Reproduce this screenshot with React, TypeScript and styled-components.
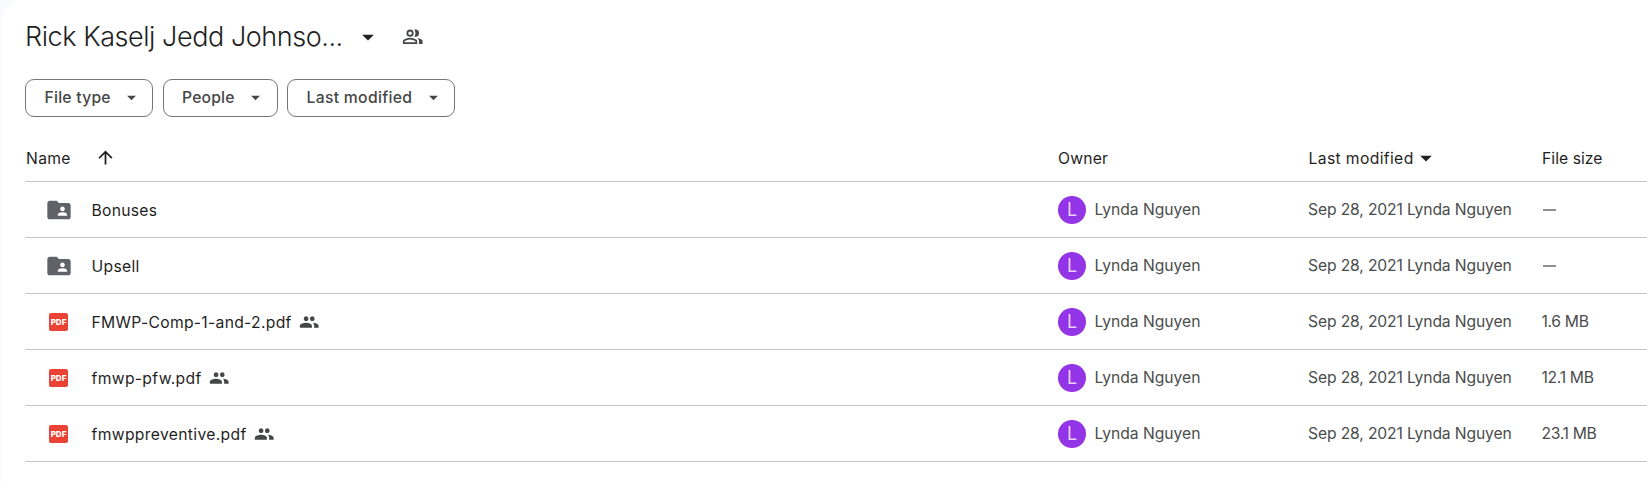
import React from "react";
import styled, { createGlobalStyle } from "styled-components";

const Global = createGlobalStyle`
  *, *::before, *::after { box-sizing: border-box; }
  body { margin: 0; background: #f8fafd; overflow: hidden; }
`;

const Panel = styled.main`
  height: 482px;
  margin-left: 2px;
  padding: 16px 0 0 23px;
  background: #fff;
  border-top-left-radius: 19px;
  font-family: Inter, "Liberation Sans", sans-serif;
  font-size: 15.7px;
  color: #1f1f1f;
  overflow: hidden;
`;

const Label = styled.span<{ $track?: number }>`
  letter-spacing: ${(p) => p.$track ?? 0}px;
  white-space: nowrap;
`;

const TitleBar = styled.header`
  display: flex;
  align-items: center;
  height: 42px;
`;

const Title = styled.h1`
  width: 329px;
  margin: 0;
  font-size: 27px;
  font-weight: 300;
  line-height: 42px;
  letter-spacing: -0.45px;
  white-space: nowrap;
`;

const Icon = styled.svg<{ $size: number; $color?: string }>`
  display: block;
  flex: none;
  width: ${(p) => p.$size}px;
  height: ${(p) => p.$size}px;
  fill: ${(p) => p.$color ?? "#1f1f1f"};
`;

const TitlePeople = styled.span`
  margin-left: 20px;
`;

const Chips = styled.div`
  display: flex;
  gap: 9.5px;
  margin-top: 21px;
`;

const Chip = styled.button<{ $width: number }>`
  display: flex;
  align-items: center;
  justify-content: space-between;
  width: ${(p) => p.$width}px;
  height: 38px;
  padding: 0 10.5px 2px 18.5px;
  border: 1px solid #747775;
  border-radius: 9px;
  background: #fff;
  color: #444746;
  font: 500 15.7px Inter, "Liberation Sans", sans-serif;
`;

const Row = styled.div`
  display: grid;
  grid-template-columns: 1032px 250.500px 233.500px 1fr;
  align-items: center;
  height: 56px;
  border-bottom: 1px solid #c4c7c5;
`;

const HeadRow = styled(Row)`
  height: 65px;
  padding-top: 18px;
`;

const HeadCell = styled.div`
  display: flex;
  align-items: center;
  padding-left: 1px;
`;

const SortArrow = styled.span`
  margin: -1px 0 0 24px;
`;

const SortCaret = styled.span`
  margin-left: -2px;
`;

const NameCell = styled.div`
  display: flex;
  align-items: center;
  padding: 1px 0 0 20px;
`;

const IconSlot = styled.span<{ $pdf: boolean }>`
  display: flex;
  align-items: center;
  justify-content: center;
  width: 28px;
  height: 28px;
  margin-right: 18.5px;
  padding-right: ${(p) => (p.$pdf ? 1 : 0)}px;
`;

const PdfBadge = styled.span`
  display: flex;
  align-items: center;
  justify-content: center;
  flex: none;
  width: 19px;
  height: 18px;
  border-radius: 2px;
  background: #ea4335;
  color: #fff;
  font-size: 8px;
  font-weight: 800;
  line-height: 1;
`;

const Shared = styled.span`
  margin-left: 7.5px;
`;

const Meta = styled.div`
  display: flex;
  align-items: center;
  font-weight: 400;
  color: #4a4d4c;
  padding: 0 0 1px 0.5px;
`;

const Avatar = styled.span`
  display: flex;
  align-items: center;
  justify-content: center;
  width: 28px;
  height: 28px;
  margin: 1px 8.5px 0 0.5px;
  border-radius: 50%;
  background: #9334e6;
  color: #ead2ff;
  font-size: 18px;
`;

const Dash = styled.span`
  width: 13px;
  height: 2px;
  margin: 1px 0 0 1px;
  background: #8e918f;
`;

const Caret = ({ size, color }: { size: number; color?: string }) => (
  <Icon $size={size} $color={color} viewBox="0 0 24 24"><path d="M7 10l5 5 5-5z" /></Icon>
);

const FolderShared = () => (
  <Icon $size={28} $color="#5f6368" viewBox="0 0 24 24">
    <path d="M20 6h-8l-2-2H4c-1.1 0-1.99.9-1.99 2L2 18c0 1.1.9 2 2 2h16c1.1 0 2-.9 2-2V8c0-1.1-.9-2-2-2zm-5 3c1.1 0 2 .9 2 2s-.9 2-2 2-2-.9-2-2 .9-2 2-2zm4 8h-8v-1c0-1.33 2.67-2 4-2s4 .67 4 2v1z" />
  </Icon>
);

const PeopleFilled = () => (
  <Icon $size={20} $color="#444746" viewBox="0 0 24 24">
    <path d="M16 10.800c1.500 0 2.700-1.250 2.700-2.800S17.500 5.200 16 5.200 13.200 6.450 13.200 8s1.300 2.800 2.800 2.800zm-7.500 0c1.500 0 2.800-1.250 2.800-2.800S10 5.200 8.500 5.200 5.700 6.450 5.700 8s1.300 2.800 2.800 2.800zM8.500 13C5.800 13 1 14.170 1 16.500V19h14.500v-2.500c0-2.330-4.300-3.500-7-3.500zm8 0c1.160.840 1.700 1.970 1.700 3.450V19H23.500v-2.500c0-2.200-4.200-3.300-7-3.500z" />
  </Icon>
);

const PeopleOutline = () => (
  <Icon $size={21.5} $color="#444746" viewBox="0 0 24 24">
    <path d="M1 20v-2.800c0-.85.440-1.600 1.150-2C4.100 14.100 6.500 13 9 13s4.900 1.100 6.850 2.200c.71.400 1.150 1.150 1.150 2V20H1zm2-2h12v-.8c0-.15-.07-.25-.2-.32C13.100 15.900 11.100 15 9 15s-4.100.900-5.800 1.880c-.13.070-.2.170-.2.320V18zM9 12a4 4 0 1 1 0-8 4 4 0 0 1 0 8zm0-2a2 2 0 1 0 0-4 2 2 0 0 0 0 4zM13.500 11.800c1-.95 1.500-2.300 1.500-3.800s-.5-2.850-1.500-3.800c.5-.13 1-.2 1.500-.2a4 4 0 0 1 0 8c-.5 0-1-.07-1.500-.2zM19 20v-3c0-1.400-.7-2.700-2-3.650 1.500.200 2.800.600 4 1.250 1.300.700 2 1.500 2 2.400v3h-4z" />
  </Icon>
);

const chips = [
  { text: "File type", track: 0.24, width: 128 },
  { text: "People", track: 0.17, width: 115 },
  { text: "Last modified", track: 0.32, width: 168 },
];

const files = [
  { name: "Bonuses", track: 0.25, folder: true },
  { name: "Upsell", track: 0.3, folder: true },
  { name: "FMWP-Comp-1-and-2.pdf", track: 0.3, size: "1.6 MB" },
  { name: "fmwp-pfw.pdf", track: 0.33, size: "12.1 MB" },
  { name: "fmwppreventive.pdf", track: 0.33, size: "23.1 MB" },
];

export default function App() {
  return (
    <>
      <Global />
      <Panel>
        <TitleBar>
          <Title>Rick Kaselj Jedd Johnso...</Title>
          <Caret size={28} />
          <TitlePeople><PeopleOutline /></TitlePeople>
        </TitleBar>
        <Chips>
          {chips.map((c) => (
            <Chip key={c.text} $width={c.width}>
              <Label $track={c.track}>{c.text}</Label>
              <Caret size={21} color="#444746" />
            </Chip>
          ))}
        </Chips>
        <HeadRow>
          <HeadCell>
            <Label $track={0.31}>Name</Label>
            <SortArrow>
              <Icon $size={21} viewBox="0 0 24 24"><path d="M4 12l1.410 1.410L11 7.830V20h2V7.830l5.580 5.590L20 12l-8-8-8 8z" /></Icon>
            </SortArrow>
          </HeadCell>
          <HeadCell><Label $track={0.188}>Owner</Label></HeadCell>
          <HeadCell><Label $track={0.36}>Last modified</Label><SortCaret><Caret size={28} /></SortCaret></HeadCell>
          <HeadCell><Label $track={0.05}>File size</Label></HeadCell>
        </HeadRow>
        {files.map((f) => (
          <Row key={f.name}>
            <NameCell>
              <IconSlot $pdf={!f.folder}>{f.folder ? <FolderShared /> : <PdfBadge>PDF</PdfBadge>}</IconSlot>
              <Label $track={f.track}>{f.name}</Label>
              {!f.folder && <Shared><PeopleFilled /></Shared>}
            </NameCell>
            <Meta><Avatar>L</Avatar><Label $track={-0.04}>Lynda Nguyen</Label></Meta>
            <Meta><Label $track={-0.15}>Sep 28, 2021 Lynda Nguyen</Label></Meta>
            <Meta>{f.size ? <Label $track={-0.32}>{f.size}</Label> : <Dash />}</Meta>
          </Row>
        ))}
      </Panel>
    </>
  );
}
